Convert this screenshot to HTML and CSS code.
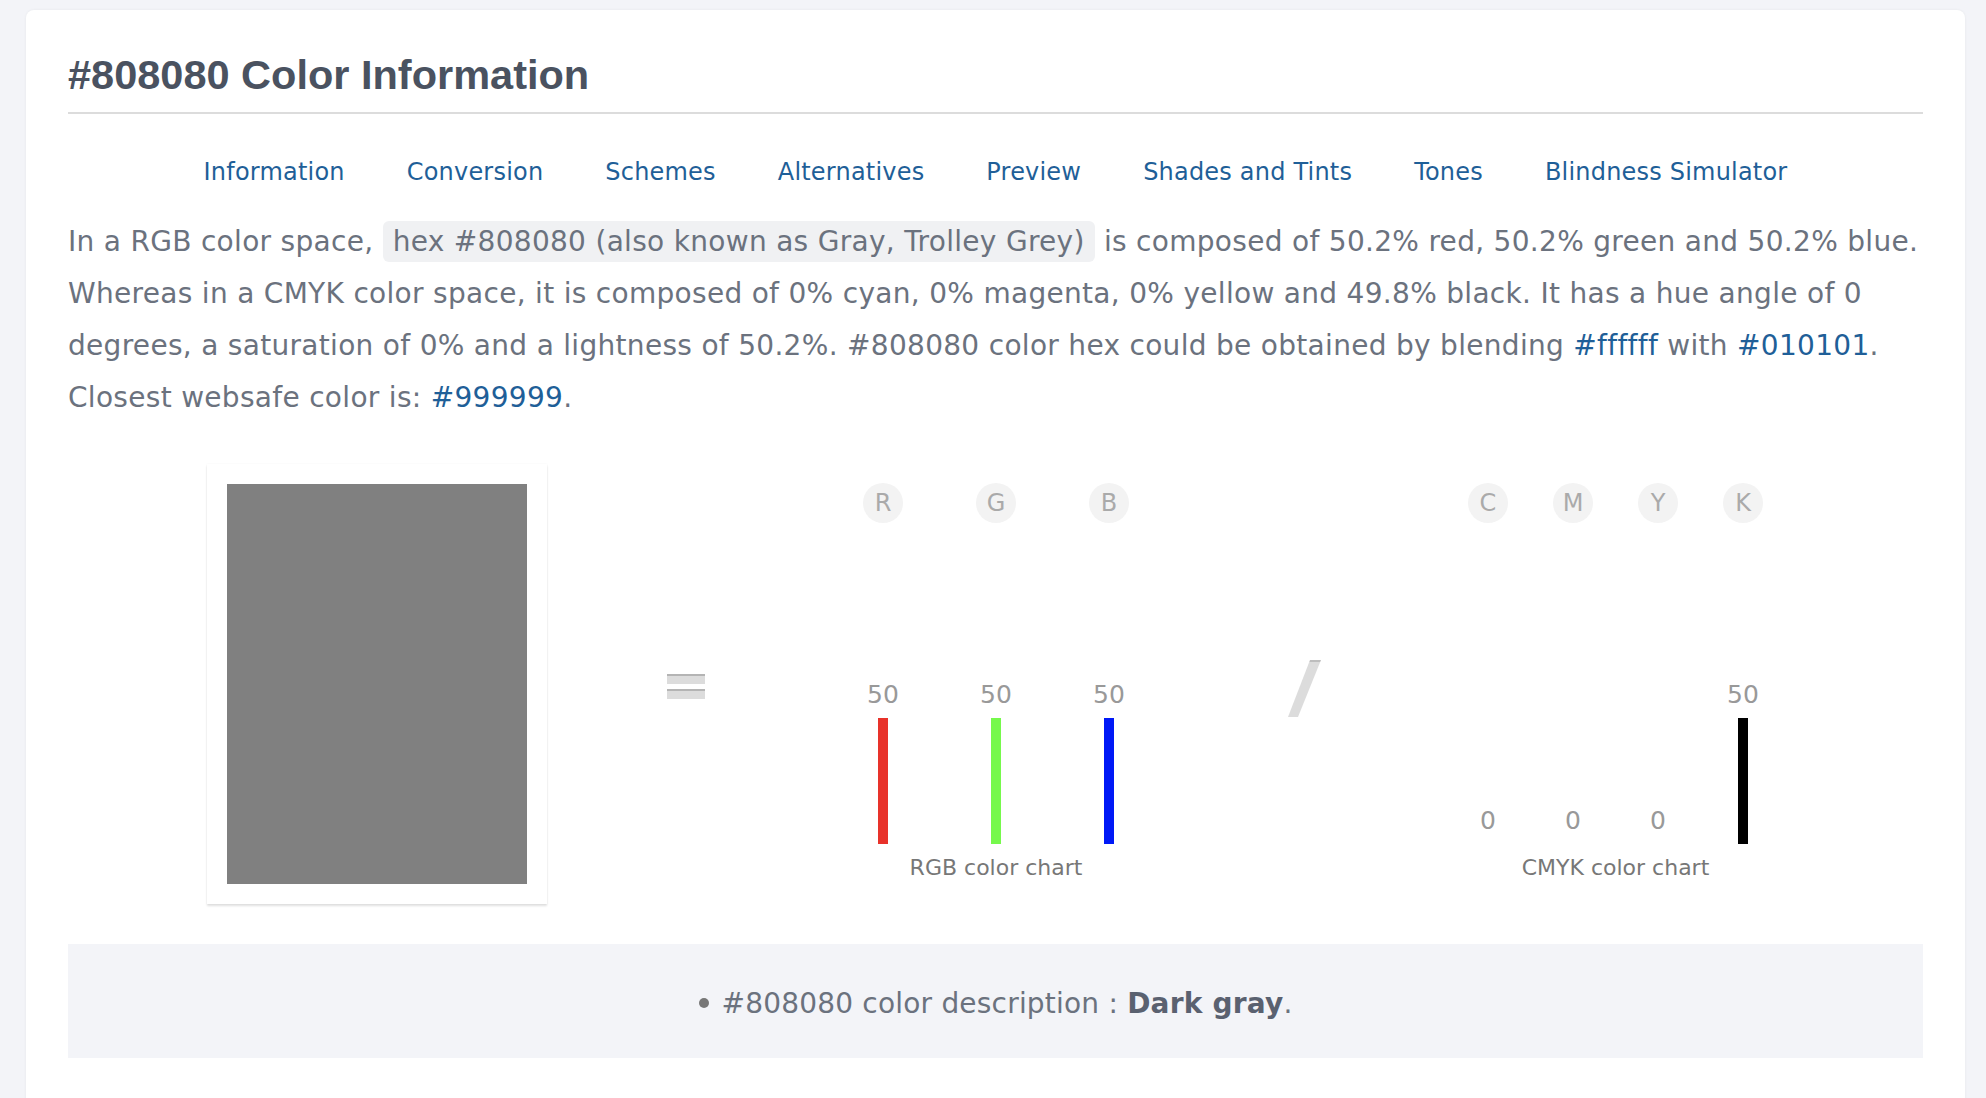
FILE: index.html
```html
<!DOCTYPE html>
<html lang="en">
<head>
<meta charset="utf-8">
<title>#808080 Color Information</title>
<link rel="stylesheet" href="styles.css">
</head>
<body>
<main class="card">
  <h1 class="title">#808080 Color Information</h1>
  <nav class="tabs">
    <a href="#information">Information</a>
    <a href="#conversion">Conversion</a>
    <a href="#schemes">Schemes</a>
    <a href="#alternatives">Alternatives</a>
    <a href="#preview">Preview</a>
    <a href="#shades">Shades and Tints</a>
    <a href="#tones">Tones</a>
    <a href="#blindness">Blindness Simulator</a>
  </nav>
  <p class="intro">In a RGB color space, <span class="hl">hex #808080 (also known as Gray, Trolley Grey)</span> is composed of 50.2% red, 50.2% green and 50.2% blue. Whereas in a CMYK color space, it is composed of 0% cyan, 0% magenta, 0% yellow and 49.8% black. It has a hue angle of 0 degrees, a saturation of 0% and a lightness of 50.2%. #808080 color hex could be obtained by blending <a href="#ffffff">#ffffff</a> with <a href="#010101">#010101</a>. Closest websafe color is: <a href="#999999">#999999</a>.</p>

  <section class="charts">
    <div class="swatch-card"><div class="swatch"></div></div>
    <div class="equals"><span></span><span></span></div>
    <div class="chart rgb">
      <div class="cols">
        <div class="col"><span class="letter">R</span><span class="val">50</span><span class="bar red" style="height:126px"></span></div>
        <div class="col"><span class="letter">G</span><span class="val">50</span><span class="bar green" style="height:126px"></span></div>
        <div class="col"><span class="letter">B</span><span class="val">50</span><span class="bar blue" style="height:126px"></span></div>
      </div>
      <div class="chart-label">RGB color chart</div>
    </div>
    <div class="slash"></div>
    <div class="chart cmyk">
      <div class="cols">
        <div class="col"><span class="letter">C</span><span class="val">0</span><span class="bar cyan" style="height:0px"></span></div>
        <div class="col"><span class="letter">M</span><span class="val">0</span><span class="bar magenta" style="height:0px"></span></div>
        <div class="col"><span class="letter">Y</span><span class="val">0</span><span class="bar yellow" style="height:0px"></span></div>
        <div class="col"><span class="letter">K</span><span class="val">50</span><span class="bar black" style="height:126px"></span></div>
      </div>
      <div class="chart-label">CMYK color chart</div>
    </div>
  </section>

  <div class="desc">
    <span class="bullet"></span>#808080 color description : <strong>Dark gray</strong>.
  </div>
</main>
</body>
</html>
```

FILE: styles.css
```css
html, body {
  margin: 0;
  padding: 0;
}
body {
  background: #f3f4f8;
  padding: 10px 21px 0 26px;
  font-family: "DejaVu Sans", Verdana, sans-serif;
  color: #6b727e;
  overflow: hidden;
  height: 1098px;
  box-sizing: border-box;
}
a {
  color: #1f5f98;
  text-decoration: none;
}
.card {
  background: #fff;
  border-radius: 8px;
  box-shadow: 0 0 3px rgba(0, 0, 0, 0.06);
  padding: 42px 42px 60px;
  min-height: 1200px;
  box-sizing: border-box;
}
.title {
  font-family: "Liberation Sans", Arial, sans-serif;
  font-weight: bold;
  font-size: 41.5px;
  line-height: 46px;
  color: #4a5260;
  margin: 0;
  padding-bottom: 14px;
  border-bottom: 2px solid #dcdcdc;
}
.tabs {
  display: flex;
  justify-content: center;
  margin-top: 40px;
  font-size: 24px;
  line-height: 36px;
  letter-spacing: 0.2px;
}
.tabs a {
  padding: 0 31px;
}
.intro {
  margin: 26px 0 0;
  font-size: 28px;
  line-height: 52px;
  letter-spacing: 0.3px;
}
.hl {
  background: #f0f1f3;
  border-radius: 6px;
  padding: 4px 10px;
}
.charts {
  display: flex;
  align-items: flex-start;
  margin-top: 40px;
  padding-left: 139px;
}
.swatch-card {
  width: 340px;
  height: 440px;
  padding: 20px;
  box-sizing: border-box;
  background: #fff;
  box-shadow: 0 2px 2px rgba(0, 0, 0, 0.12), 0 0 2px rgba(0, 0, 0, 0.04);
}
.swatch {
  width: 300px;
  height: 400px;
  background: #808080;
}
.equals {
  margin-left: 120px;
  margin-top: 210px;
  width: 38px;
  display: flex;
  flex-direction: column;
  gap: 5px;
}
.equals span {
  display: block;
  height: 10px;
  background: #dcdcdc;
  border-top: 2px solid #b4b4b4;
  box-sizing: border-box;
}
.chart {
  display: flex;
  flex-direction: column;
  align-items: center;
  margin-top: 19px;
}
.rgb {
  margin-left: 158px;
}
.cmyk {
  margin-left: 147px;
}
.cols {
  display: flex;
}
.rgb .cols {
  gap: 73px;
}
.cmyk .cols {
  gap: 45px;
}
.col {
  width: 40px;
  height: 361px;
  display: flex;
  flex-direction: column;
  align-items: center;
}
.letter {
  width: 40px;
  height: 40px;
  border-radius: 50%;
  background: #f3f3f3;
  color: #aaa;
  font-size: 24px;
  line-height: 40px;
  text-align: center;
  margin-bottom: auto;
}
.val {
  font-size: 25px;
  line-height: 28px;
  color: #999;
  margin-bottom: 9px;
}
.bar {
  display: block;
  width: 10px;
}
.red { background: #e8322a; }
.green { background: #76f94c; }
.blue { background: #0019f7; }
.cyan { background: #00ffff; }
.magenta { background: #ff00ff; }
.yellow { background: #ffff00; }
.black { background: #000; }
.chart-label {
  margin-top: 10px;
  font-size: 22px;
  line-height: 28px;
  color: #777;
}
.slash {
  margin-left: 159px;
  margin-top: 196px;
  width: 33px;
  height: 57px;
  background: linear-gradient(#bdbdbd 0 2px, #dcdcdc 2px);
  clip-path: polygon(22px 0, 33px 0, 10px 57px, 0 57px);
}
.desc {
  margin-top: 40px;
  background: #f3f4f8;
  text-align: center;
  font-size: 28px;
  line-height: 34px;
  padding: 43px 0 37px;
  letter-spacing: 0.2px;
}
.desc strong {
  color: #5a6170;
}
.bullet {
  display: inline-block;
  width: 10px;
  height: 10px;
  border-radius: 50%;
  background: #777;
  margin-right: 13px;
  vertical-align: middle;
  position: relative;
  top: -2px;
}
```
